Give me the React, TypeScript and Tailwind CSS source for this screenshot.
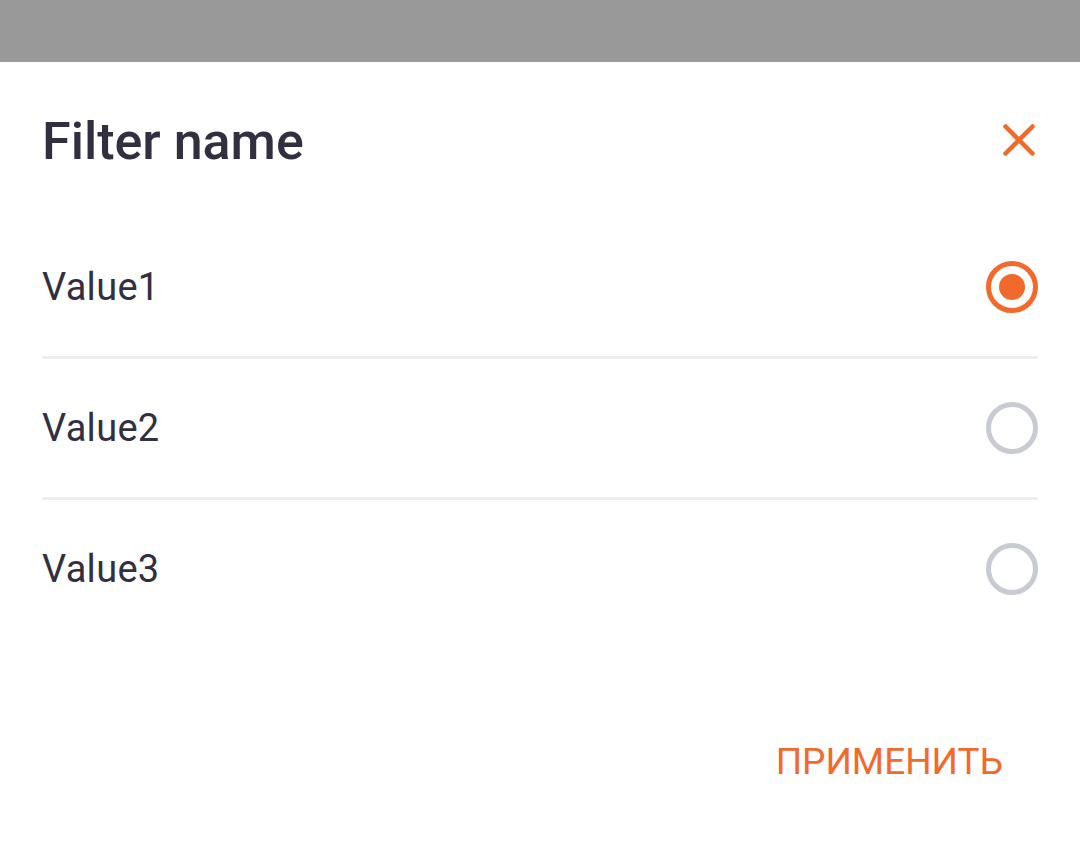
import { useState } from 'react';

const options = ['Value1', 'Value2', 'Value3'];

function Radio({ checked }: { checked: boolean }) {
  return (
    <span
      className={`flex h-[52px] w-[52px] items-center justify-center rounded-full border-[5px] ${
        checked ? 'border-[#f26a2b]' : 'border-[#c9cbd3]'
      }`}
    >
      {checked && <span className="h-[26px] w-[26px] rounded-full bg-[#f26a2b]" />}
    </span>
  );
}

export default function App() {
  const [selected, setSelected] = useState('Value1');

  return (
    <div className="flex h-[866px] w-[1080px] flex-col bg-white font-['Roboto',sans-serif] text-[#312f40]">
      {/* затемнение сверху */}
      <div className="h-[62px] bg-[#999999]" />

      <div className="flex h-[156px] items-center justify-between pl-[42px] pr-[45px]">
        <h1 className="pt-[4px] text-[52px] font-medium leading-none">Filter name</h1>
        <button className="flex h-[32px] w-[32px] items-center justify-center text-[#f26a2b]">
          <svg width="32" height="32" viewBox="0 0 32 32" fill="none">
            <path d="M2.5 2.5L29.5 29.5M29.5 2.5L2.5 29.5" stroke="currentColor" strokeWidth="4.5" strokeLinecap="round" />
          </svg>
        </button>
      </div>

      <div className="flex flex-col px-[42px]">
        {options.map((opt, i) => (
          <div key={opt}>
            <button
              onClick={() => setSelected(opt)}
              className="flex h-[138px] w-full items-center justify-between text-left"
            >
              <span className="text-[38px] leading-none tracking-[0.3px]">{opt}</span>
              <Radio checked={selected === opt} />
            </button>
            {i < options.length - 1 && <div className="h-[3px] bg-[#eceef1]" />}
          </div>
        ))}
      </div>

      <div className="flex justify-end pr-[77px] pt-[105px]">
        <button className="text-[37px] leading-none text-[#f26a2b]">ПРИМЕНИТЬ</button>
      </div>
    </div>
  );
}
